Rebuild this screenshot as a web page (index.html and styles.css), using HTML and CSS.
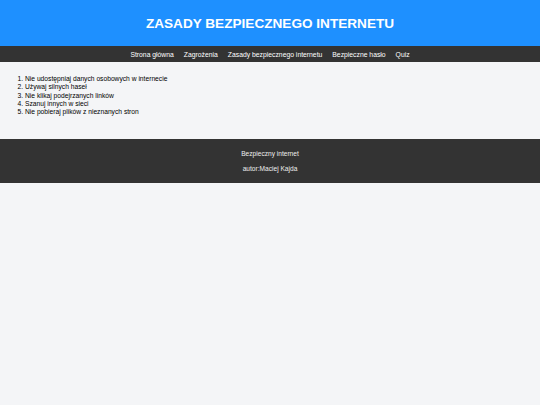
FILE: index.html
```html
<!DOCTYPE html>
<html lang="pl">
<head>
<meta charset="utf-8">
<title>Zasady bezpiecznego internetu</title>
<link rel="stylesheet" href="styles.css">
</head>
<body>
<header class="header">
  <h1 class="title">ZASADY BEZPIECZNEGO INTERNETU</h1>
</header>
<nav class="nav">
  <a href="#">Strona główna</a>
  <a href="#">Zagrożenia</a>
  <a href="#">Zasady bezpiecznego internetu</a>
  <a href="#">Bezpieczne hasło</a>
  <a href="#">Quiz</a>
</nav>
<main class="main">
  <ol class="rules">
    <li>Nie udostępniaj danych osobowych w internecie</li>
    <li>Używaj silnych haseł</li>
    <li>Nie klikaj podejrzanych linków</li>
    <li>Szanuj innych w sieci</li>
    <li>Nie pobieraj plików z nieznanych stron</li>
  </ol>
</main>
<footer class="footer">
  <p>Bezpieczny internet</p>
  <p>autor:Maciej Kajda</p>
</footer>
</body>
</html>
```
FILE: styles.css
```css
html, body {
  margin: 0;
  padding: 0;
  background: #f4f5f7;
  font-family: "Liberation Sans", Arial, sans-serif;
}
.header {
  background: #1e90ff;
  height: 46px;
  display: flex;
  align-items: center;
  justify-content: center;
}
.title {
  margin: 0;
  color: #fff;
  font-size: 13.6px;
  font-weight: bold;
}
.nav {
  background: #333;
  height: 16px;
  display: flex;
  justify-content: center;
  align-items: center;
  gap: 10px;
}
.nav a {
  color: #fff;
  text-decoration: none;
  font-size: 6.8px;
}
.main {
  padding: 13px 10px 23px;
}
.rules {
  margin: 0;
  padding-left: 15px;
  font-size: 6.7px;
  line-height: 8.25px;
  color: #000;
}
.footer {
  background: #333;
  color: #eee;
  text-align: center;
  font-size: 6.6px;
  padding: 7px 0;
}
.footer p {
  margin: 0;
  line-height: 15px;
}
```
